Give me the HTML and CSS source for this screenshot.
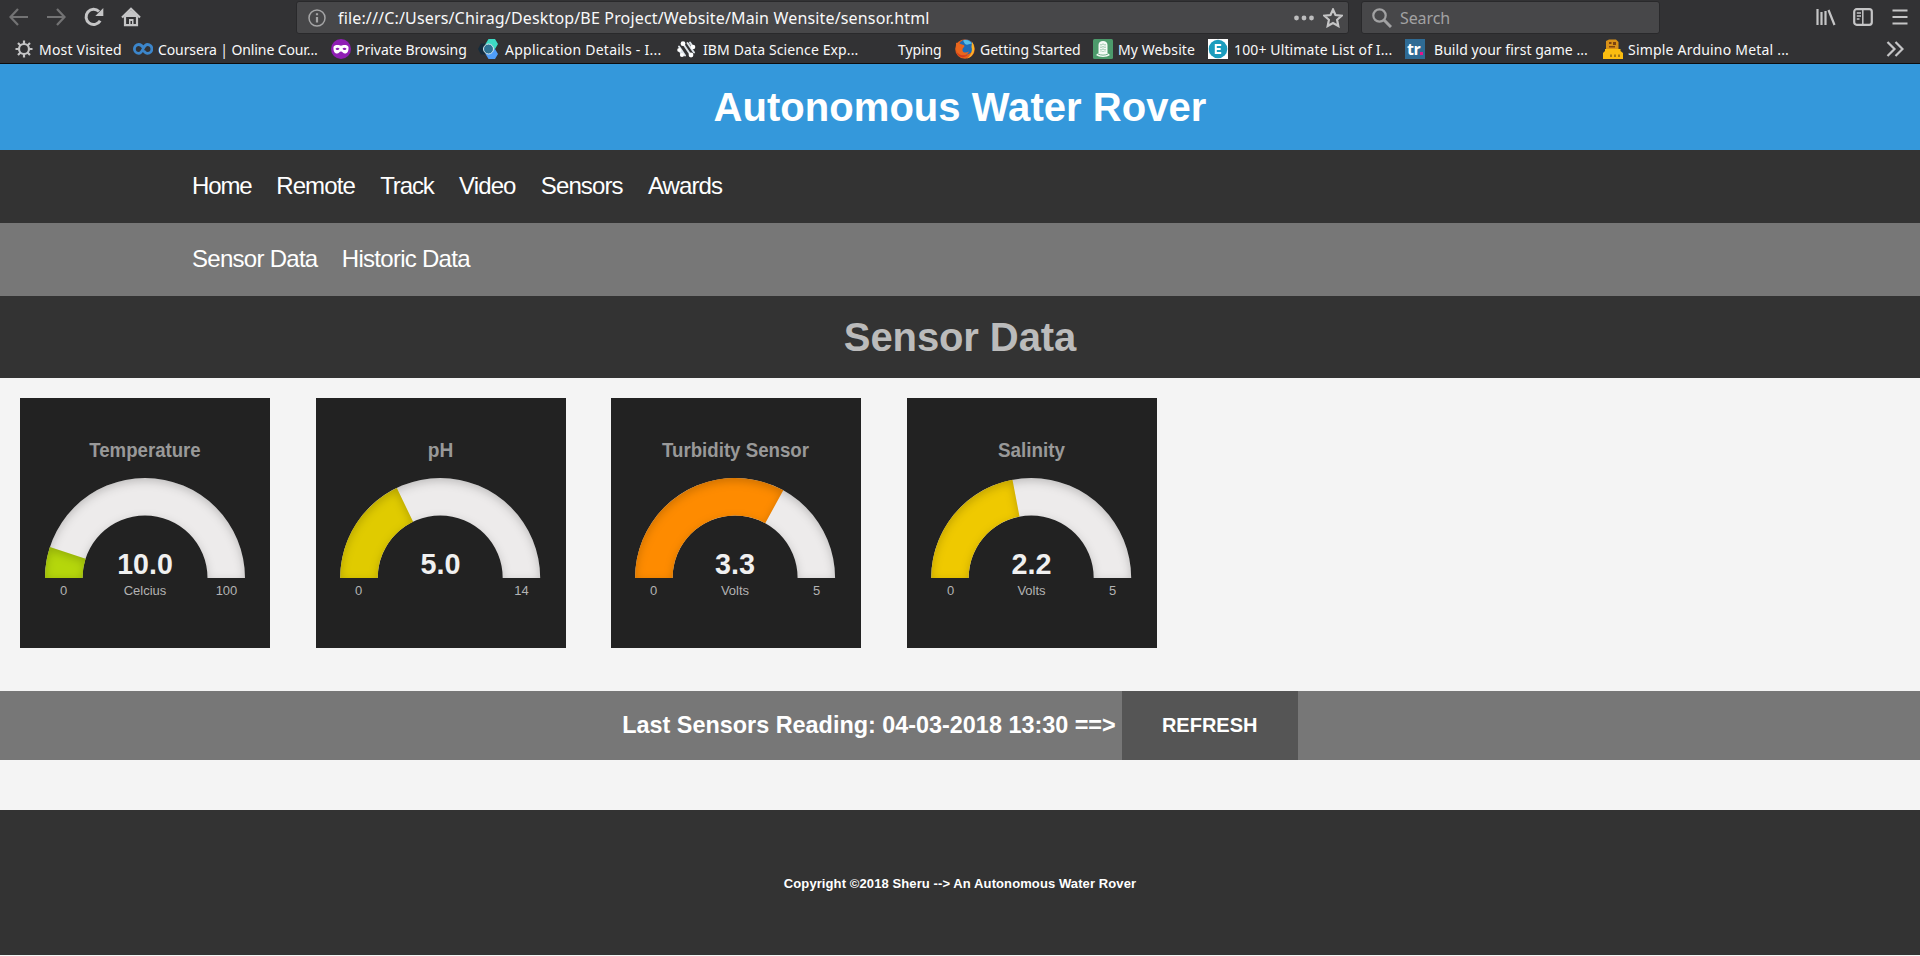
FILE: index.html
```html
<!DOCTYPE html>
<html lang="en">
<head>
<meta charset="utf-8">
<title>Autonomous Water Rover</title>
<link rel="stylesheet" href="styles.css">
</head>
<body>
<div class="browser">
  <div class="toolbar">
    <div class="nav-buttons">
      <svg width="20" height="20" viewBox="0 0 20 20" class="dim"><path d="M19 10H1.5M9 2L1.500 10L9 18"/></svg>
      <svg width="20" height="20" viewBox="0 0 20 20" class="dim"><path d="M1 10H18.500M11 2L18.500 10L11 18"/></svg>
      <svg width="20" height="20" viewBox="0 0 20 20" class="lit thick"><path d="M16.200 13.800A7.600 7.600 0 1 1 15 4.500"/><path class="solid" d="M19.300 1V9H11.300Z"/></svg>
      <svg width="20" height="20" viewBox="0 0 20 20" class="lit"><path d="M1 10.500L10 1.800L19 10.500M4 9.500V18.200H16V9.500"/><path class="solid" d="M4 8L10 3L16 8V10H4ZM8 12H12.500V18H11V14H9.500V18H8Z"/></svg>
    </div>
    <div class="urlbar">
      <svg width="18" height="18" viewBox="0 0 18 18" class="info"><circle cx="9" cy="9" r="8"/><path class="stem" d="M9 8V13.500M9 4.300V6.200"/></svg>
      <span class="url">file:///C:/Users/Chirag/Desktop/BE Project/Website/Main Wensite/sensor.html</span>
      <svg width="20" height="20" viewBox="0 0 20 20" class="dots"><circle cx="2.500" cy="10" r="2.400"/><circle cx="10" cy="10" r="2.400"/><circle cx="17.500" cy="10" r="2.400"/></svg>
      <svg width="20" height="20" viewBox="0 0 20 20" class="lit star"><path d="M10 1.500L12.500 7L18.600 7.700L14.100 11.800L15.300 18L10 15L4.700 18L5.900 11.800L1.400 7.700L7.500 7Z"/></svg>
    </div>
    <div class="searchbar">
      <svg width="20" height="20" viewBox="0 0 20 20" class="glass"><circle cx="7.500" cy="7.500" r="6.200"/><path d="M12 12L19 19"/></svg>
      <span>Search</span>
    </div>
    <div class="tools">
      <svg width="20" height="18" viewBox="0 0 20 18" class="lit"><path d="M1.500 1V17M5.500 4V17M9.500 3V17M12.500 2L18.500 17"/></svg>
      <svg width="20" height="18" viewBox="0 0 20 18" class="lit"><rect x="1.200" y="1.200" width="17.600" height="15.600" rx="2.500"/><path class="fine" d="M9.800 1V17M3.800 5H8M3.800 8H8M3.800 11H6.500"/></svg>
      <svg width="16" height="18" viewBox="0 0 16 18" class="lit"><path d="M.5 2.500H15.500M.5 9H15.500M.5 15.500H15.500"/></svg>
    </div>
  </div>
  <div class="bookmarks">
    <div class="bookmark b1"><svg width="18" height="18" viewBox="0 0 18 18" class="lit"><circle cx="9" cy="9" r="5"/><path d="M9 .5V4M9 14V17.500M.5 9H4M14 9H17.500M3 3L5.500 5.500M12.500 12.500L15 15M15 3L12.500 5.500M5.500 12.500L3 15"/></svg><span>Most Visited</span></div>
    <div class="bookmark b2"><svg width="20" height="12" viewBox="0 0 20 12" class="coursera"><path d="M10.500 5C8.500 1.800 7.300 1.500 5.800 1.500A4.400 4.400 0 0 0 5.800 10.300C10 10.300 10 1.500 14.500 1.500A4.400 4.400 0 0 1 14.500 10.300C12.500 10.300 11.500 9 10.700 7.600"/></svg><span>Coursera | Online Cour...</span></div>
    <div class="bookmark b3"><svg width="20" height="20" viewBox="0 0 20 20"><circle cx="10" cy="10" r="10" fill="#8f1eb4"/><path fill="#fff" fill-rule="evenodd" d="M2.500 8C3 5.500 8 5.500 10 6.800C12 5.500 17 5.500 17.500 8C17.800 12 16.500 14.500 14 14.500C12 14.500 11.500 12.500 10 12.500S8 14.500 6 14.500C3.500 14.500 2.200 12 2.500 8ZM4.500 9.800C5.500 8.500 7.800 8.500 8.500 9.800C7.500 11.500 5.200 11.500 4.500 9.800ZM11.500 9.800C12.200 8.500 14.500 8.500 15.500 9.800C14.800 11.500 12.500 11.500 11.500 9.800Z"/></svg><span>Private Browsing</span></div>
    <div class="bookmark b4"><svg width="20" height="20" viewBox="0 0 20 20"><path fill="#142b3c" d="M3 4.500H9L12 10L9 15.500H3L0 10Z"/><path fill="#3edac4" d="M10.500 0H17L20 5L17 10H10.500L7.500 5Z"/><path fill="#4f9df8" d="M10.500 10H17L20 15L17 20H10.500L7.500 15Z"/><circle cx="10.500" cy="10" r="5" fill="#2e7294" stroke="#d8e8ee" stroke-width="1"/></svg><span>Application Details - I...</span></div>
    <div class="bookmark b5"><svg width="19" height="17" viewBox="0 0 19 17"><g stroke="#dde3e8" stroke-width="2" stroke-linecap="round"><path d="M6 2.500L14 14.500M2 5.500L8 14.500M10.500 2L17 11.500M2.300 9L5 14M13 1.500L16 6"/></g><g fill="#fff"><circle cx="6" cy="2.700" r="2.400"/><circle cx="2.300" cy="9" r="2.100"/><circle cx="16" cy="6" r="2.300"/><circle cx="5" cy="14" r="2.100"/><circle cx="14" cy="14" r="2.400"/></g></svg><span>IBM Data Science Exp...</span></div>
    <div class="bookmark b6"><span>Typing</span></div>
    <div class="bookmark b7"><svg width="20" height="20" viewBox="0 0 20 20"><circle cx="10" cy="10" r="9.800" fill="#e4611b"/><circle cx="11" cy="8" r="7.500" fill="#1d6bb5"/><path fill="#55bde8" d="M8 1.500C12 0 16 2 17 5C14 4 13 7 10 5Z"/><path fill="#e9661d" d="M1 4C3 3 5 5 7 5.500C10 6 10 8 8 9C6 13 10 15 14 12.500C12 18 3 17 1.500 12Z"/><path fill="#fbb42a" d="M17 3C21 8 20 17 12 19.500C15 17 18 13 16.500 8Z"/><path fill="#d43c1c" d="M1 12C4 17 9 17 13 15.500C9 20 3 19 1 12Z"/></svg><span>Getting Started</span></div>
    <div class="bookmark b8"><svg width="20" height="20" viewBox="0 0 20 20"><rect width="20" height="20" rx="1.500" fill="#4c9a6b"/><path fill="#f4faf6" d="M5.500 14V6C5.500 3.500 7.500 2 10 2S14.500 3.500 14.500 6V14L17 16C14 18.500 6 18.500 3 16Z"/><path stroke="#4c9a6b" stroke-width=".7" stroke-dasharray="1.500 1" fill="none" d="M8 5V13M10 4.500V13M12 5V13"/><path stroke="#4c9a6b" stroke-width=".8" fill="none" d="M5 15C8 16.500 12 16.500 15 15"/></svg><span>My Website</span></div>
    <div class="bookmark b9"><svg width="20" height="20" viewBox="0 0 20 20"><rect width="20" height="20" fill="#fff"/><circle cx="10" cy="10" r="9.300" fill="#1a9cbd"/><path stroke="#fff" stroke-width="2" fill="none" d="M13.200 6H7.800V14H13.200M7.800 10H12.700"/></svg><span>100+ Ultimate List of I...</span></div>
    <div class="bookmark b10"><svg width="20" height="20" viewBox="0 0 20 20"><rect width="20" height="20" fill="#2f6b94"/><text x="2" y="15.500" class="tr">tr</text><rect x="15" y="13" width="3" height="3" fill="#e5148c"/></svg><span>Build your first game ...</span></div>
    <div class="bookmark b11"><svg width="20" height="20" viewBox="0 0 20 20"><path fill="#d99218" d="M3 2L6 .5H13L15.500 3V10H3Z"/><path fill="#7c4312" d="M6 3H8.500V5H6ZM10 3H13V6H10ZM6 7H12V8.500H6Z"/><path fill="#fbbd10" d="M2 10H17.500V12L20 14V20H0V14L2 12Z"/><path fill="#a77a12" d="M7 15.500H9V18H7ZM11 15.500H13V18H11ZM15 15.500H17V18H15Z"/></svg><span>Simple Arduino Metal ...</span></div>
    <svg width="18" height="16" viewBox="0 0 18 16" class="lit more"><path d="M1.500 1L8.500 8L1.500 15M9.500 1L16.500 8L9.500 15"/></svg>
  </div>
</div>

<header class="banner"><h1>Autonomous Water Rover</h1></header>
<nav class="menu main-menu"><a class="home">Home</a><a class="remote">Remote</a><a class="track">Track</a><a class="video">Video</a><a class="sensors">Sensors</a><a class="awards">Awards</a></nav>
<nav class="menu sub-menu"><a>Sensor Data</a><a>Historic Data</a></nav>
<section class="heading"><h1>Sensor Data</h1></section>

<svg width="0" height="0" class="defs"><defs>
  <filter id="inner" x="-5%" y="-5%" width="110%" height="110%" color-interpolation-filters="sRGB"><feOffset dx="0" dy="3"/><feGaussianBlur stdDeviation="5" result="blur"/><feComposite operator="out" in="SourceGraphic" in2="blur" result="inverse"/><feFlood flood-color="black" flood-opacity=".2" result="color"/><feComposite operator="in" in="color" in2="inverse" result="shadow"/><feComposite operator="over" in="shadow" in2="SourceGraphic"/></filter>
  <path id="track" d="M25 180A100 100 0 0 1 225 180H187.500A62.500 62.500 0 0 0 62.500 180Z"/>
</defs></svg>

<main class="gauges">
  <svg class="gauge" width="250" height="250" viewBox="0 0 250 250">
    <use href="#track" fill="#edebeb" filter="url(#inner)"/>
    <path fill="#b5d70b" filter="url(#inner)" d="M25 180A100 100 0 0 1 29.890 149.100L65.560 160.690A62.500 62.500 0 0 0 62.500 180Z"/>
    <text class="g-title" x="125" y="59" textLength="111.500" lengthAdjust="spacingAndGlyphs">Temperature</text>
    <text class="g-value" x="125" y="175.500" textLength="55.500" lengthAdjust="spacingAndGlyphs">10.0</text><text class="g-label" x="125" y="197">Celcius</text>
    <text class="g-label" x="43.500" y="197">0</text><text class="g-label" x="206.500" y="197">100</text>
  </svg>
  <svg class="gauge" width="250" height="250" viewBox="0 0 250 250">
    <g transform="translate(-.8)"><use href="#track" fill="#edebeb" filter="url(#inner)"/>
    <path fill="#e0cb00" filter="url(#inner)" d="M25 180A100 100 0 0 1 81.610 89.900L97.880 123.690A62.500 62.500 0 0 0 62.500 180Z"/></g>
    <text class="g-title" x="124.500" y="59" textLength="25.500" lengthAdjust="spacingAndGlyphs">pH</text>
    <text class="g-value" x="124.500" y="175.500" textLength="40" lengthAdjust="spacingAndGlyphs">5.0</text>
    <text class="g-label" x="42.500" y="197">0</text><text class="g-label" x="205.500" y="197">14</text>
  </svg>
  <svg class="gauge" width="250" height="250" viewBox="0 0 250 250">
    <g transform="translate(-.9)"><use href="#track" fill="#edebeb" filter="url(#inner)"/>
    <path fill="#fe8b00" filter="url(#inner)" d="M25 180A100 100 0 0 1 173.180 92.370L155.110 125.230A62.500 62.500 0 0 0 62.500 180Z"/></g>
    <text class="g-title" x="124.500" y="59" textLength="147" lengthAdjust="spacingAndGlyphs">Turbidity Sensor</text>
    <text class="g-value" x="124" y="175.500" textLength="40" lengthAdjust="spacingAndGlyphs">3.3</text><text class="g-label" x="124" y="197">Volts</text>
    <text class="g-label" x="42.500" y="197">0</text><text class="g-label" x="205.500" y="197">5</text>
  </svg>
  <svg class="gauge" width="250" height="250" viewBox="0 0 250 250">
    <g transform="translate(-.8)"><use href="#track" fill="#edebeb" filter="url(#inner)"/>
    <path fill="#efc900" filter="url(#inner)" d="M25 180A100 100 0 0 1 106.260 81.770L113.290 118.610A62.500 62.500 0 0 0 62.500 180Z"/></g>
    <text class="g-title" x="124.500" y="59" textLength="67" lengthAdjust="spacingAndGlyphs">Salinity</text>
    <text class="g-value" x="124.500" y="175.500" textLength="40" lengthAdjust="spacingAndGlyphs">2.2</text><text class="g-label" x="124.500" y="197">Volts</text>
    <text class="g-label" x="43.500" y="197">0</text><text class="g-label" x="205.500" y="197">5</text>
  </svg>
</main>

<section class="reading"><h3>Last Sensors Reading: 04-03-2018 13:30 ==&gt;</h3><button class="refresh">REFRESH</button></section>
<footer class="footer">Copyright ©2018 Sheru --&gt; An Autonomous Water Rover</footer>
</body>
</html>
```
FILE: styles.css
```css
* { box-sizing: border-box; }
body { margin: 0; height: 956px; overflow: hidden; background: #f4f4f4; font-family: "Liberation Sans", Arial, sans-serif; }
h1, h3 { margin: 0; }
svg { flex: none; display: block; }

/* Browser chrome */
.browser { height: 64px; background: #323234; border-bottom: 1px solid #0c0c0d; font-family: "Noto Sans", "Open Sans", sans-serif; color: #f9f9fa; }
.toolbar { display: flex; height: 34px; padding-top: 1px; }
.toolbar path, .toolbar circle, .toolbar rect, .more path { fill: none; stroke-width: 2.2; }
.dim { stroke: #737374; }
.lit { stroke: #c5c5c6; fill: none; stroke-width: 2.2; }
.toolbar .thick path { stroke-width: 3; }
.toolbar .solid, .toolbar .thick .solid { fill: #c5c5c6; stroke: none; }
.nav-buttons { display: flex; gap: 17px; width: 296px; padding: 6px 0 0 9px; }
.nav-buttons svg:nth-child(3) { margin-left: 1px; }
.urlbar, .searchbar { display: flex; align-items: center; height: 33px; background: #474749; border: 1px solid #29292b; border-radius: 3px; }
.urlbar { width: 1053px; padding-left: 11px; }
.info { stroke: #a5a5a6; }
.toolbar .info circle { stroke-width: 1.5; }
.url { flex: 1; padding: 1px 0 0 12px; font-size: 16px; letter-spacing: .16px; white-space: pre; }
.toolbar .dots circle { fill: #bdbdbe; }
.star { margin: 0 5px 0 9px; }
.searchbar { width: 299px; margin-left: 12px; padding-left: 10px; color: #a2a2a3; font-size: 16px; }
.searchbar span { margin: 1px 0 0 8px; letter-spacing: -.1px; }
.glass { stroke: #a2a2a3; }
.toolbar .glass path { stroke-width: 3; }
.tools { display: flex; gap: 17px; margin: 7px 0 0 156px; }
.tools svg:nth-child(3) { margin-left: 2px; }
.toolbar .fine { stroke-width: 1.5; }
.bookmarks { display: flex; align-items: center; height: 30px; padding-left: 15px; font-size: 14px; white-space: pre; }
.bookmark { display: flex; align-items: center; flex: none; height: 30px; }
.bookmark svg { margin-right: 5px; }
.bookmark span { padding-top: 1px; }
.b1 { width: 118px; letter-spacing: .2px; }
.b1 svg { margin-right: 6px; }
.b2 { width: 198px; letter-spacing: -.11px; }
.b3 { width: 147px; }
.b4 { width: 199px; letter-spacing: .24px; }
.b4 svg { margin-right: 7px; }
.b5 { width: 221px; letter-spacing: .12px; }
.b5 svg { margin-right: 7px; }
.b6 { width: 57px; letter-spacing: -.1px; }
.b7 { width: 138px; }
.b8 { width: 115px; letter-spacing: .1px; }
.b9 { width: 197px; letter-spacing: .13px; }
.b9 svg { margin-right: 6px; }
.b10 { width: 198px; letter-spacing: .04px; }
.b10 svg { margin-right: 9px; }
.b11 { width: 283px; letter-spacing: .2px; }
.coursera path { fill: none; stroke: #3c86cb; stroke-width: 2.8; }
.tr { fill: #fff; font: bold 16px "Open Sans", sans-serif; letter-spacing: -.5px; }

/* Site */
.banner, .heading { display: flex; align-items: center; justify-content: center; }
.banner { height: 86px; background: #3498db; color: #fff; }
.banner h1 { font-size: 40px; letter-spacing: .04px; }
.menu { display: flex; align-items: center; gap: 25.3px; height: 73px; padding: 0 10% 2px 192px; color: #fff; font-size: 24px; letter-spacing: -.9px; }
.main-menu { background: #333; }
.sub-menu { background: #777; letter-spacing: -.72px; gap: 24.3px; }
.home { letter-spacing: -1.15px; }
.track { letter-spacing: -1.1px; }
.remote { margin-left: -.5px; }
.heading { height: 82px; background: #333; color: #bbb; }
.heading h1 { font-size: 40px; letter-spacing: -.1px; }
.defs { position: absolute; }
.gauges { display: flex; gap: 45.6px; padding: 20px 20px 43px; }
.gauge { background: #222; text-anchor: middle; }
.g-title { font-size: 19.6px; font-weight: bold; fill: #999; }
.g-value { font-size: 29.5px; font-weight: bold; fill: #f0f0f0; }
.g-label { font-size: 13px; fill: #b3b3b3; }
.reading { display: flex; align-items: center; justify-content: center; height: 69px; background: #777; color: #fff; }
.reading h3 { padding-bottom: 1px; font-size: 23.4px; margin-right: 6px; }
.refresh { width: 176px; height: 69px; padding: 0; border: 0; background: #555; color: #fff; font: bold 20px "Liberation Sans", Arial, sans-serif; }
.footer { display: flex; align-items: center; justify-content: center; height: 145px; margin-top: 50px; padding-top: 2px; background: #333; color: #fff; font-size: 13px; font-weight: bold; letter-spacing: .1px; }
```
